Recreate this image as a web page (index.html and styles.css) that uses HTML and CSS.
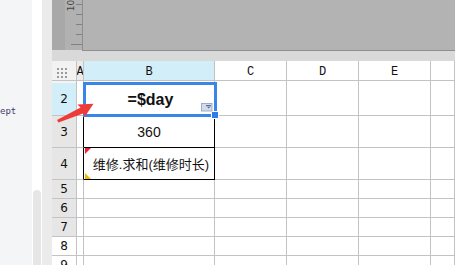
FILE: index.html
```html
<!DOCTYPE html>
<html lang="en">
<head>
    <meta charset="UTF-8">
    <title>Sheet</title>
    <link rel="stylesheet" href="styles.css">
</head>
<body>
    <div class="app">
        <aside class="side">
            <div class="side-main"><span class="code">ept</span></div>
            <div class="side-track"><div class="thumb"></div></div>
            <div class="side-edge"></div>
        </aside>

        <main class="workspace">
            <div class="canvas-top">
                <div class="shade"></div>
                <div class="ruler">
                    <span class="ruler-label">10</span>
                    <i class="tick"></i>
                    <i class="tick"></i>
                    <i class="tick"></i>
                    <i class="tick"></i>
                    <i class="tick long"></i>
                </div>
                <div class="page"></div>
            </div>
            <div class="strip"></div>

            <div class="grid">
                <!-- header -->
                <div class="cell corner">
                    <div class="dots">
                        <i></i><i></i><i></i><i></i><i></i><i></i><i></i><i></i><i></i>
                    </div>
                </div>
                <div class="cell col-head col-a">A</div>
                <div class="cell col-head active">B</div>
                <div class="cell col-head">C</div>
                <div class="cell col-head">D</div>
                <div class="cell col-head">E</div>
                <div class="cell col-head"></div>

                <!-- row 1 (hidden) -->
                <div class="cell row-head thin"></div>
                <div class="cell thin"></div>
                <div class="cell thin"></div>
                <div class="cell thin"></div>
                <div class="cell thin"></div>
                <div class="cell thin"></div>
                <div class="cell thin"></div>

                <!-- row 2 -->
                <div class="cell row-head active">2</div>
                <div class="cell"></div>
                <div class="cell value formula">=$day</div>
                <div class="cell"></div>
                <div class="cell"></div>
                <div class="cell"></div>
                <div class="cell"></div>

                <!-- row 3 -->
                <div class="cell row-head">3</div>
                <div class="cell edge"></div>
                <div class="cell value boxed">360</div>
                <div class="cell"></div>
                <div class="cell"></div>
                <div class="cell"></div>
                <div class="cell"></div>

                <!-- row 4 -->
                <div class="cell row-head">4</div>
                <div class="cell edge"></div>
                <div class="cell value boxed marked">维修.求和(维修时长)</div>
                <div class="cell"></div>
                <div class="cell"></div>
                <div class="cell"></div>
                <div class="cell"></div>

                <div class="cell row-head">5</div>
                <div class="cell"></div><div class="cell"></div><div class="cell"></div><div class="cell"></div><div class="cell"></div><div class="cell"></div>
                <div class="cell row-head">6</div>
                <div class="cell"></div><div class="cell"></div><div class="cell"></div><div class="cell"></div><div class="cell"></div><div class="cell"></div>
                <div class="cell row-head">7</div>
                <div class="cell"></div><div class="cell"></div><div class="cell"></div><div class="cell"></div><div class="cell"></div><div class="cell"></div>
                <div class="cell row-head light">8</div>
                <div class="cell"></div><div class="cell"></div><div class="cell"></div><div class="cell"></div><div class="cell"></div><div class="cell"></div>
                <div class="cell row-head light">9</div>
                <div class="cell"></div><div class="cell"></div><div class="cell"></div><div class="cell"></div><div class="cell"></div><div class="cell"></div>

                <div class="selection"></div>
                <div class="fill-handle"></div>
                <svg class="paste-icon" width="12" height="9" viewBox="0 0 12 9">
                    <rect x="0.5" y="0.5" width="10.5" height="7.5" fill="#d3dbea" stroke="#9eabc7"/>
                    <rect x="5" y="2" width="5" height="1.2" fill="#5d6e94"/>
                    <path d="M6 3.8 L9.5 3.8 L7.75 5.6 Z" fill="#5d6e94"/>
                </svg>
            </div>
        </main>

        <svg class="pointer" width="455" height="265" viewBox="0 0 455 265">
            <path d="M57 120 L80.5 107.5 L77.5 104.5 L93.5 103.8 L85 116.5 L83 113.5 L58.5 122.5 Z" fill="#ef3a3a"/>
        </svg>
    </div>
</body>
</html>
```

FILE: styles.css
```css
body {
    margin: 0;
    background-color: #fff;
}

.app {
    display: flex;
    width: 455px;
    height: 265px;
    overflow: hidden;
    position: relative;
}

/* left panel */
.side {
    display: flex;
    width: 52px;
    flex-shrink: 0;
}

.side-main {
    width: 32px;
    background-color: #f4f5f7;
    padding-top: 106px;
    box-sizing: border-box;
}

.code {
    display: block;
    font-family: "DejaVu Sans Mono", monospace;
    font-size: 9px;
    color: #47396a;
}

.side-track {
    width: 10px;
    background-color: #fff;
    padding-top: 190px;
    box-sizing: border-box;
}

.thumb {
    width: 8px;
    height: 80px;
    margin-left: 1px;
    border-radius: 4px 4px 0 0;
    background-color: #e6e6e6;
}

.side-edge {
    width: 10px;
    background-color: #ebebeb;
}

/* sheet */
.workspace {
    flex: 1;
    display: flex;
    flex-direction: column;
    min-width: 0;
}

.canvas-top {
    display: flex;
    flex-shrink: 0;
    height: 51px;
    background-color: #d9d9d9;
}

.shade {
    width: 13px;
    height: 50px;
    background-color: #a8a8a8;
}

.ruler {
    position: relative;
    width: 17px;
    height: 50px;
    background-color: #b1b1b1;
    display: flex;
    flex-direction: column;
    align-items: flex-end;
    gap: 9px;
    padding-top: 4px;
    box-sizing: border-box;
}

.ruler-label {
    position: absolute;
    left: 1px;
    top: 1px;
    transform: rotate(-90deg);
    font-family: "DejaVu Sans", sans-serif;
    font-size: 9px;
    line-height: 9px;
    color: #444;
}

.tick {
    display: block;
    width: 6px;
    height: 1px;
    background-color: #808080;
}

.tick.long {
    width: 11px;
}

.page {
    flex: 1;
    height: 51px;
    box-sizing: border-box;
    background-color: #b3b3b3;
    border-left: 1px solid #8f8f8f;
    border-bottom: 1px solid #8f8f8f;
}

.strip {
    flex-shrink: 0;
    height: 10px;
    background-color: #d9d9d9;
}

.grid {
    position: relative;
    flex-shrink: 0;
    display: grid;
    grid-template-columns: 25px 7px 131px 72px 72px 72px 1fr;
    grid-template-rows: 20px 2px 33px 32px 32px 19px 19px 19px 19px 19px;
    background-color: #fff;
}

.cell {
    position: relative;
    box-sizing: border-box;
    border-right: 1px solid #c3c3c3;
    border-bottom: 1px solid #c3c3c3;
    display: flex;
    align-items: center;
    justify-content: center;
    font-family: "Liberation Sans", "Noto Sans CJK SC", sans-serif;
    font-size: 14px;
    color: #111;
    overflow: hidden;
    white-space: nowrap;
}

.cell.thin {
    border-bottom: none;
}

.corner {
    background-color: #f2f2f2;
    align-items: flex-start;
    justify-content: flex-start;
}

.dots {
    display: grid;
    grid-template-columns: repeat(3, 2px);
    gap: 2px;
    margin: 7px 0 0 5px;
}

.dots i {
    width: 2px;
    height: 2px;
    background-color: #9a9a9a;
}

.col-head {
    font-family: "Liberation Mono", monospace;
    font-size: 12px;
    padding-top: 2px;
    color: #111;
}

.col-a {
    background-color: #ebebeb;
}

.col-head.active,
.row-head.active {
    background-color: #d2eff9;
}

.row-head {
    background-color: #e6e6e6;
    font-family: "DejaVu Sans", sans-serif;
    font-size: 12px;
    color: #111;
}

.row-head.light {
    background-color: #fff;
}

.row-head.thin {
    background-color: #f4f4f4;
}

.formula {
    font-size: 16px;
    font-weight: bold;
    padding-top: 2px;
    padding-left: 3px;
}

.edge {
    border-right-color: #000;
}

.boxed {
    border-right-color: #000;
    border-bottom-color: #000;
}

.marked {
    font-size: 13px;
    padding-left: 4px;
}

.marked::before,
.marked::after {
    content: "";
    position: absolute;
    left: 1px;
    width: 0;
    height: 0;
    border-right: 6px solid transparent;
}

.marked::before {
    top: 0;
    border-top: 6px solid #f01e3c;
}

.marked::after {
    bottom: 0;
    border-bottom: 6px solid #f5b400;
}

/* active cell overlay */
.selection {
    position: absolute;
    left: 31px;
    top: 21px;
    width: 134px;
    height: 35px;
    box-sizing: border-box;
    border: 3px solid #3a86e8;
}

.fill-handle {
    position: absolute;
    left: 160px;
    top: 51px;
    width: 6px;
    height: 6px;
    background-color: #2f7de6;
    border: 1px solid #fff;
    box-sizing: content-box;
    margin: -1px 0 0 -1px;
}

.paste-icon {
    position: absolute;
    left: 149px;
    top: 42px;
}

.pointer {
    position: absolute;
    left: 0;
    top: 0;
    pointer-events: none;
}
```
